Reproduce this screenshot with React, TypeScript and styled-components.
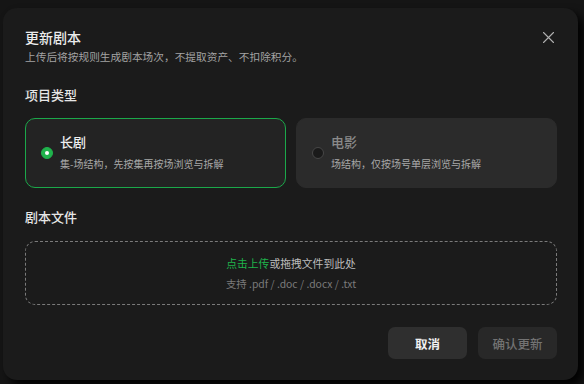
import React, { useState } from "react";
import styled, { createGlobalStyle } from "styled-components";

const Global = createGlobalStyle`
  html, body { margin: 0; padding: 0; background: #151515; }
  body { font-family: "Noto Sans CJK SC", "Noto Sans", "Liberation Sans", sans-serif; }
  * { box-sizing: border-box; }
`;

const Page = styled.div`
  width: 584px;
  height: 384px;
  padding: 8px 6px 4px 3px;
  overflow: hidden;
`;

const Dialog = styled.div`
  width: 575px;
  height: 372px;
  background: #1b1b1b;
  border-radius: 14px;
  box-shadow: 6px 6px 10px rgba(0, 0, 0, 0.95);
  padding: 19px 21px 21px 22px;
  display: flex;
  flex-direction: column;
  position: relative;
`;

const Header = styled.div`
  display: flex;
  justify-content: space-between;
  align-items: flex-start;
`;

const Title = styled.div`
  font-size: 14px;
  line-height: 20px;
  font-weight: 500;
  color: #ececec;
`;

const Subtitle = styled.div`
  margin-top: 2px;
  font-size: 10.7px;
  line-height: 16px;
  color: #a3a3a3;
`;

const Close = styled.button`
  margin: 3px 2px 0 0;
  width: 14px;
  height: 14px;
  padding: 0;
  border: none;
  background: none;
  display: flex;
  align-items: center;
  justify-content: center;
  cursor: pointer;
`;

const Label = styled.div<{ $top: number }>`
  margin-top: ${(p) => p.$top}px;
  font-size: 13px;
  line-height: 18px;
  font-weight: 500;
  color: #e6e6e6;
`;

const Cards = styled.div`
  margin-top: 14px;
  display: grid;
  grid-template-columns: 1fr 1fr;
  gap: 10px;
`;

const Card = styled.div<{ $active: boolean }>`
  height: 70px;
  border-radius: 10px;
  background: ${(p) => (p.$active ? "#232323" : "#2b2b2b")};
  border: 1px solid ${(p) => (p.$active ? "#1ba84a" : "#2b2b2b")};
  display: flex;
  align-items: center;
  gap: 7px;
  padding: 0 0 0 15px;
  cursor: pointer;
`;

const Radio = styled.span<{ $active: boolean }>`
  width: 12px;
  height: 12px;
  border-radius: 50%;
  flex: none;
  background: ${(p) => (p.$active ? "#1fb34c" : "#1a1a1a")};
  border: 1px solid ${(p) => (p.$active ? "#1fb34c" : "#474747")};
  display: flex;
  align-items: center;
  justify-content: center;
  &::after {
    content: "";
    display: ${(p) => (p.$active ? "block" : "none")};
    width: 4px;
    height: 4px;
    border-radius: 50%;
    background: #fff;
  }
`;

const CardText = styled.div`
  display: flex;
  flex-direction: column;
  gap: 5px;
  margin-top: -1px;
`;

const CardTitle = styled.div<{ $active: boolean }>`
  font-size: 13px;
  line-height: 18px;
  font-weight: 500;
  color: ${(p) => (p.$active ? "#efefef" : "#8a8a8a")};
`;

const CardDesc = styled.div`
  font-size: 10px;
  line-height: 16px;
  color: #a8a8a8;
`;

const Drop = styled.div`
  margin-top: 15px;
  height: 64px;
  border: 1px dashed #7a7a7a;
  border-radius: 10px;
  display: flex;
  flex-direction: column;
  align-items: center;
  justify-content: center;
  gap: 5px;
  cursor: pointer;
`;

const DropMain = styled.div`
  font-size: 10.8px;
  line-height: 16px;
  color: #bdbdbd;
  span { color: #1fb34c; }
`;

const DropHint = styled.div`
  font-size: 10.4px;
  line-height: 15px;
  color: #7a7a7a;
`;

const Footer = styled.div`
  margin-top: 22px;
  display: flex;
  justify-content: flex-end;
  gap: 11px;
`;

const Button = styled.button<{ $disabled?: boolean }>`
  width: 79px;
  height: 32px;
  border: none;
  border-radius: 7px;
  background: ${(p) => (p.$disabled ? "#282828" : "#2f2f2f")};
  color: ${(p) => (p.$disabled ? "#737373" : "#f0f0f0")};
  font-family: inherit;
  font-size: 12.5px;
  font-weight: ${(p) => (p.$disabled ? 500 : 600)};
  cursor: ${(p) => (p.$disabled ? "not-allowed" : "pointer")};
`;

const types = [
  { key: "series", title: "长剧", desc: "集-场结构，先按集再按场浏览与拆解" },
  { key: "movie", title: "电影", desc: "场结构，仅按场号单层浏览与拆解" },
];

export default function App() {
  const [type, setType] = useState("series");
  return (
    <>
      <Global />
      <Page>
        <Dialog>
          <Header>
            <div>
              <Title>更新剧本</Title>
              <Subtitle>上传后将按规则生成剧本场次，不提取资产、不扣除积分。</Subtitle>
            </div>
            <Close aria-label="关闭">
              <svg width="11" height="11" viewBox="0 0 11 11">
                <path d="M0.5 0.5 L10.5 10.5 M10.5 0.5 L0.5 10.5" stroke="#b0b0b0" strokeWidth="1.1" strokeLinecap="round" />
              </svg>
            </Close>
          </Header>
          <Label $top={21}>项目类型</Label>
          <Cards>
            {types.map((t) => {
              const active = type === t.key;
              return (
                <Card key={t.key} $active={active} onClick={() => setType(t.key)}>
                  <Radio $active={active} />
                  <CardText>
                    <CardTitle $active={active}>{t.title}</CardTitle>
                    <CardDesc>{t.desc}</CardDesc>
                  </CardText>
                </Card>
              );
            })}
          </Cards>
          <Label $top={20}>剧本文件</Label>
          <Drop>
            <DropMain>
              <span>点击上传</span>或拖拽文件到此处
            </DropMain>
            <DropHint>支持 .pdf / .doc / .docx / .txt</DropHint>
          </Drop>
          <Footer>
            <Button>取消</Button>
            <Button $disabled>确认更新</Button>
          </Footer>
        </Dialog>
      </Page>
    </>
  );
}
